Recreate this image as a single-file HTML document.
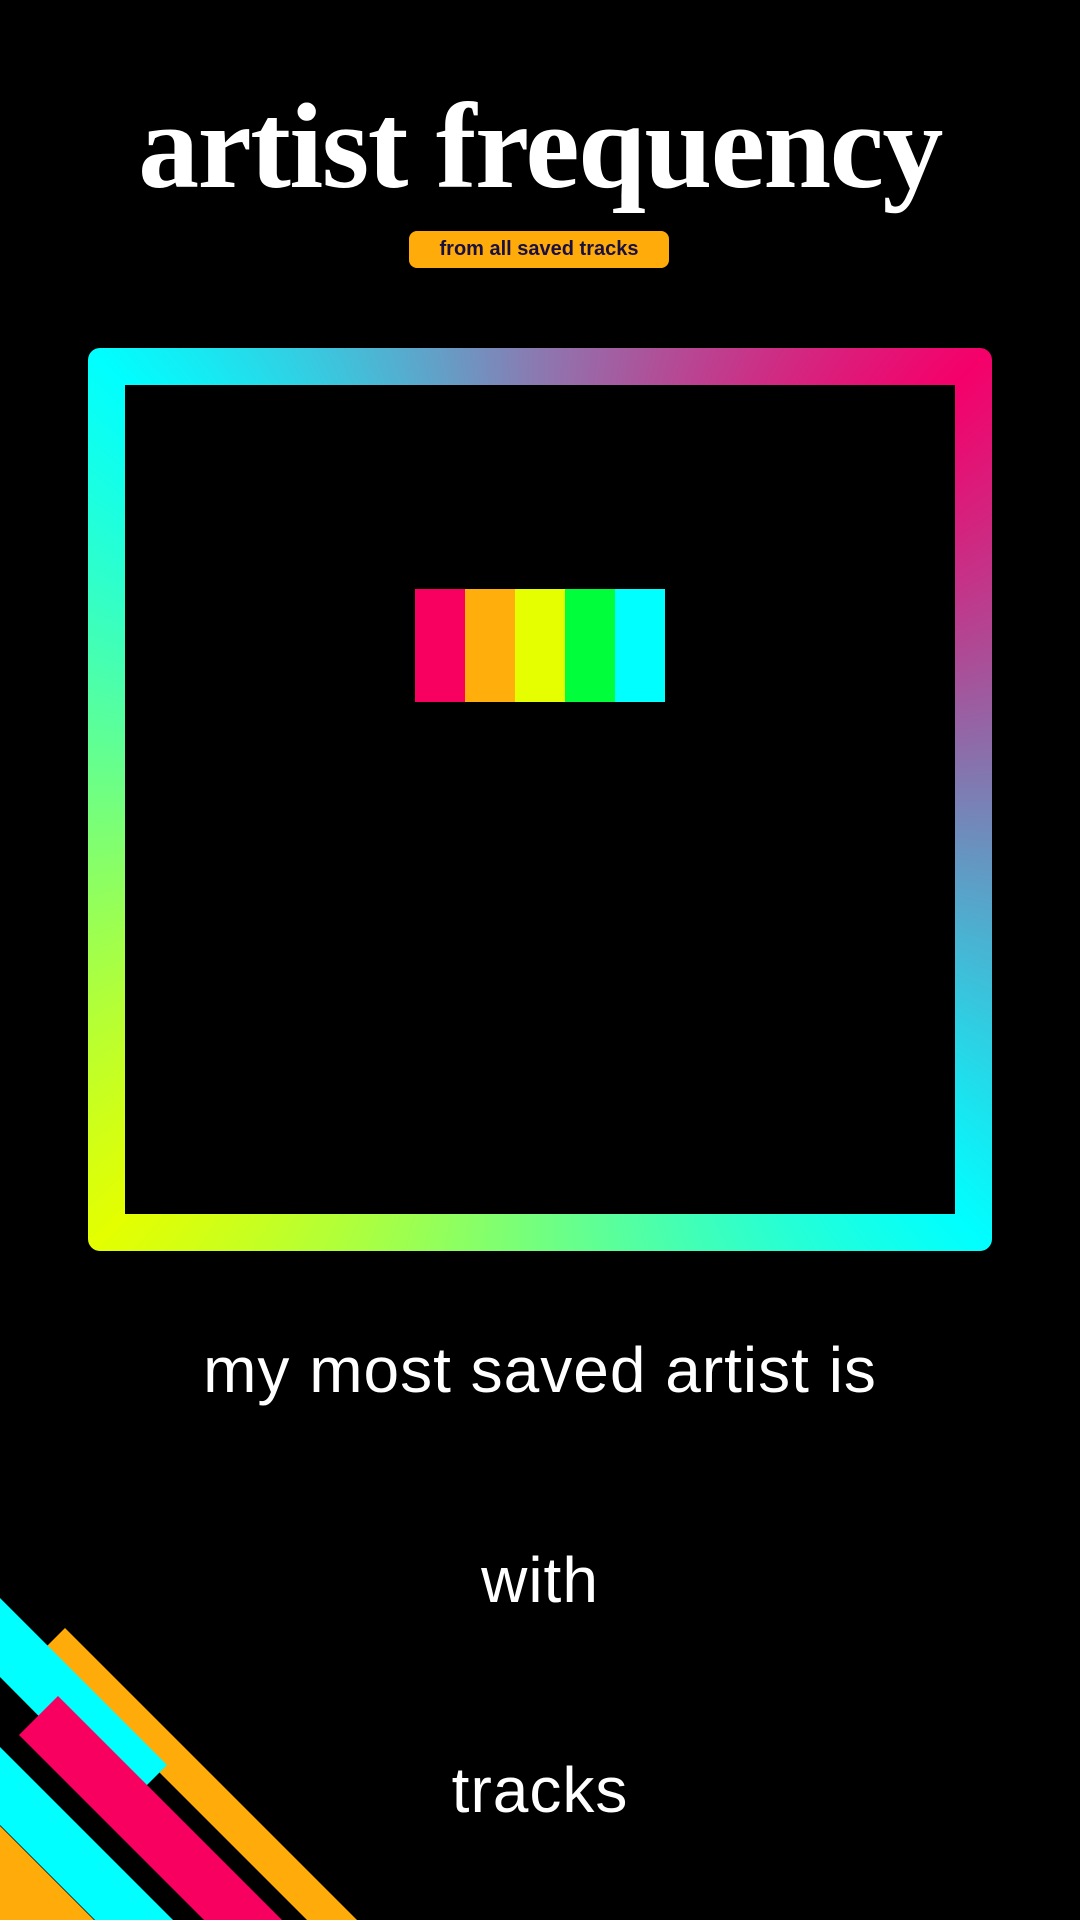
<!DOCTYPE html>
<html><head><meta charset="utf-8"><style>
html,body{margin:0;padding:0;background:#000;}
body{width:1080px;height:1920px;position:relative;overflow:hidden;font-family:"Liberation Sans",sans-serif;}
.title{position:absolute;left:0;width:1080px;top:72px;text-align:center;color:#fff;font-family:"Liberation Serif",serif;font-weight:bold;font-size:122px;letter-spacing:-1.5px;line-height:150px;}
.badge{position:absolute;left:409px;top:231px;width:260px;height:37px;background:#ffab0a;border-radius:8px;color:#1a1040;font-weight:bold;font-size:20px;line-height:37px;text-align:center;}
.frame{position:absolute;left:88px;top:348px;width:904px;height:903px;border-radius:12px;background:conic-gradient(from 0deg,#8c78b0 0deg,#f5006a 45deg,#00ffff 135deg,#e4ff00 225deg,#00ffff 315deg,#8c78b0 360deg);}
.inner{position:absolute;left:37px;top:37px;right:37px;bottom:37px;background:#000;}
.bars{position:absolute;left:415px;top:589px;height:113px;display:flex;}
.bars div{width:50px;height:113px;}
.t{position:absolute;left:0;width:1080px;text-align:center;color:#fff;font-size:64px;line-height:80px;letter-spacing:1px;}
</style></head><body>
<div class="title">artist frequency</div>
<div class="badge">from all saved tracks</div>
<div class="frame"><div class="inner"></div></div>
<div class="bars"><div style="background:#f8005f"></div><div style="background:#ffae0c"></div><div style="background:#e6ff00"></div><div style="background:#00ff3a"></div><div style="background:#00ffff"></div></div>
<div class="t" style="top:1330px">my most saved artist is</div>
<div class="t" style="top:1540px">with</div>
<div class="t" style="top:1750px">tracks</div>
<svg style="position:absolute;left:0;top:0" width="1080" height="1920">
<polygon points="65,1628 357,1920 307,1920 40,1653" fill="#ffab0a"/>
<polygon points="0,1598 167,1765 127,1805 0,1677" fill="#00ffff"/>
<polygon points="58,1696 282,1920 204,1920 19,1735" fill="#f8005f"/>
<polygon points="0,1747 173,1920 95,1920 0,1825" fill="#00ffff"/>
<polygon points="0,1826 94,1920 0,1920" fill="#ffab0a"/>
</svg>
</body></html>
